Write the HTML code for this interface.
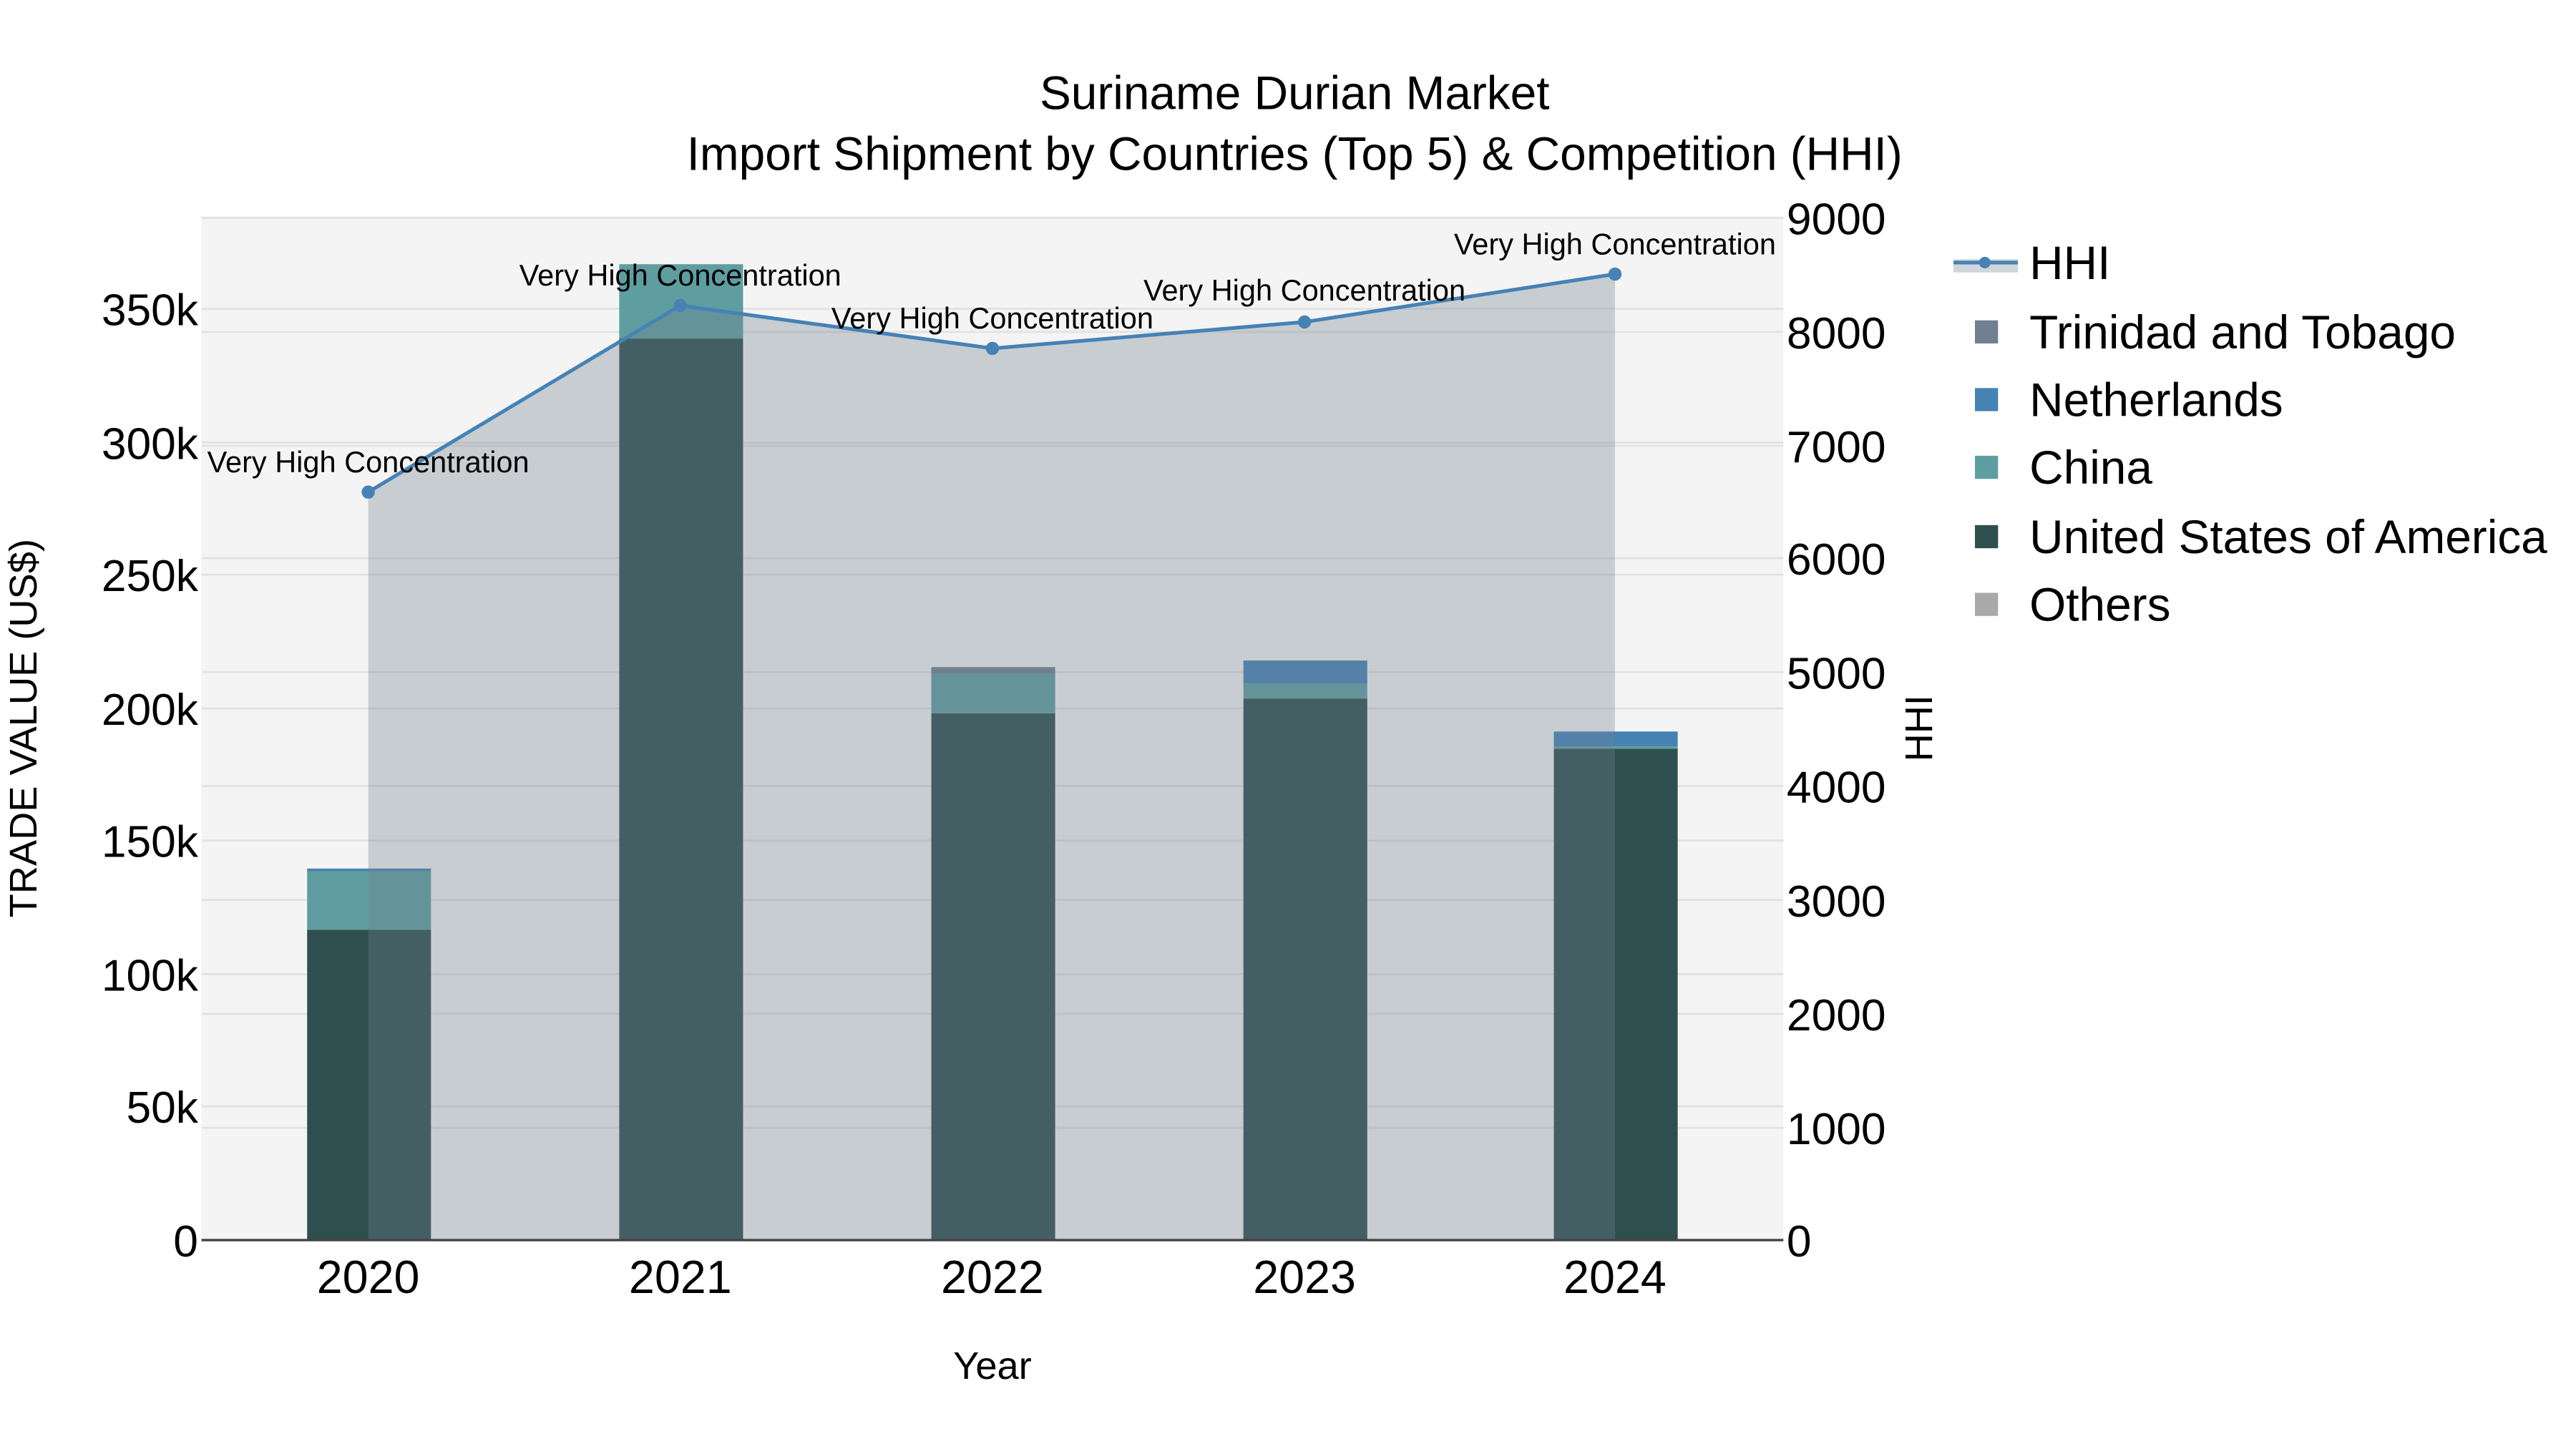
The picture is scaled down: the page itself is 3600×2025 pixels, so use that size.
<!DOCTYPE html>
<html><head><meta charset="utf-8"><style>
html,body{margin:0;padding:0;background:#fff;}
svg{display:block;}
text{font-family:"Liberation Sans",Arial,sans-serif;}
</style></head><body>
<svg width="3600" height="2025" viewBox="0 0 1560 877.5" xmlns="http://www.w3.org/2000/svg">
<rect x="0" y="0" width="1560" height="877.5" fill="#fff"/>
<rect x="122" y="131" width="958" height="620" fill="#f4f4f4"/>
<g stroke="#e2e2e2" stroke-width="1.2">
<line x1="122" x2="1080" y1="670" y2="670"/><line x1="122" x2="1080" y1="590" y2="590"/>
<line x1="122" x2="1080" y1="509" y2="509"/><line x1="122" x2="1080" y1="429" y2="429"/>
<line x1="122" x2="1080" y1="348" y2="348"/><line x1="122" x2="1080" y1="268" y2="268"/>
<line x1="122" x2="1080" y1="187" y2="187"/>
<line x1="122" x2="1080" y1="683" y2="683"/><line x1="122" x2="1080" y1="614" y2="614"/>
<line x1="122" x2="1080" y1="545" y2="545"/><line x1="122" x2="1080" y1="476" y2="476"/>
<line x1="122" x2="1080" y1="407" y2="407"/><line x1="122" x2="1080" y1="338" y2="338"/>
<line x1="122" x2="1080" y1="270" y2="270"/><line x1="122" x2="1080" y1="201" y2="201"/>
<line x1="122" x2="1080" y1="132" y2="132"/>
</g>
<g>
<rect x="186" y="563" width="75" height="188" fill="#2f4f4f"/>
<rect x="186" y="527" width="75" height="36" fill="#5f9ea0"/>
<rect x="186" y="526" width="75" height="1.5" fill="#4682b4"/>
<rect x="375" y="205" width="75" height="546" fill="#2f4f4f"/>
<rect x="375" y="160" width="75" height="45" fill="#5f9ea0"/>
<rect x="564" y="432" width="75" height="319" fill="#2f4f4f"/>
<rect x="564" y="408" width="75" height="24" fill="#5f9ea0"/>
<rect x="564" y="404" width="75" height="4" fill="#708090"/>
<rect x="753" y="423" width="75" height="328" fill="#2f4f4f"/>
<rect x="753" y="414" width="75" height="9" fill="#5f9ea0"/>
<rect x="753" y="400" width="75" height="14" fill="#4682b4"/>
<rect x="941" y="453" width="75" height="298" fill="#2f4f4f"/>
<rect x="941" y="452" width="75" height="1.5" fill="#5f9ea0"/>
<rect x="941" y="443" width="75" height="9" fill="#4682b4"/>
</g>
<polygon points="223,751 223,298 412,185 601,211 790,195 978,166 978,751" fill="rgba(112,128,144,0.33)"/>
<polyline points="223,298 412,185 601,211 790,195 978,166" fill="none" stroke="#4682b4" stroke-width="2.2"/>
<g fill="#4682b4"><circle cx="223" cy="298" r="4"/><circle cx="412" cy="185" r="4"/><circle cx="601" cy="211" r="4"/><circle cx="790" cy="195" r="4"/><circle cx="978" cy="166" r="4"/></g>
<g font-size="18" text-anchor="middle" fill="#000">
<text x="223" y="286">Very High Concentration</text>
<text x="412" y="173">Very High Concentration</text>
<text x="601" y="199">Very High Concentration</text>
<text x="790" y="182">Very High Concentration</text>
<text x="978" y="154">Very High Concentration</text>
</g>
<line x1="122" x2="1080" y1="751" y2="751" stroke="#444" stroke-width="1.5"/>
<g font-size="27" text-anchor="end" fill="#000">
<text x="120" y="761">0</text><text x="120" y="680">50k</text><text x="120" y="600">100k</text>
<text x="120" y="519">150k</text><text x="120" y="439">200k</text><text x="120" y="358">250k</text>
<text x="120" y="278">300k</text><text x="120" y="197">350k</text>
</g>
<g font-size="27" text-anchor="start" fill="#000">
<text x="1082" y="761">0</text><text x="1082" y="693">1000</text><text x="1082" y="624">2000</text>
<text x="1082" y="555">3000</text><text x="1082" y="486">4000</text><text x="1082" y="417">5000</text>
<text x="1082" y="348">6000</text><text x="1082" y="280">7000</text><text x="1082" y="211">8000</text>
<text x="1082" y="142">9000</text>
</g>
<g font-size="28" text-anchor="middle" fill="#000">
<text x="223" y="783">2020</text><text x="412" y="783">2021</text><text x="601" y="783">2022</text>
<text x="790" y="783">2023</text><text x="978" y="783">2024</text>
</g>
<text x="601" y="835" font-size="23.5" text-anchor="middle">Year</text>
<text transform="translate(22,441) rotate(-90)" font-size="23.5" text-anchor="middle">TRADE VALUE (US$)</text>
<text transform="translate(1170,441) rotate(-90)" font-size="23.5" text-anchor="middle">HHI</text>
<text x="784" y="66" font-size="28.5" text-anchor="middle">Suriname Durian Market</text>
<text x="784" y="103" font-size="28.5" text-anchor="middle">Import Shipment by Countries (Top 5) &amp; Competition (HHI)</text>
<rect x="1183" y="157" width="39" height="8" fill="rgba(112,128,144,0.33)"/>
<line x1="1183" x2="1222" y1="159" y2="159" stroke="#4682b4" stroke-width="2.2"/>
<circle cx="1202" cy="159" r="3.5" fill="#4682b4"/>
<rect x="1196" y="194" width="14" height="14" fill="#708090"/>
<rect x="1196" y="235" width="14" height="14" fill="#4682b4"/>
<rect x="1196" y="276" width="14" height="14" fill="#5f9ea0"/>
<rect x="1196" y="318" width="14" height="14" fill="#2f4f4f"/>
<rect x="1196" y="359" width="14" height="14" fill="#a9a9a9"/>
<g font-size="28.5" fill="#000">
<text x="1229" y="169">HHI</text>
<text x="1229" y="211">Trinidad and Tobago</text>
<text x="1229" y="252">Netherlands</text>
<text x="1229" y="293">China</text>
<text x="1229" y="335">United States of America</text>
<text x="1229" y="376">Others</text>
</g>
</svg>
</body></html>
